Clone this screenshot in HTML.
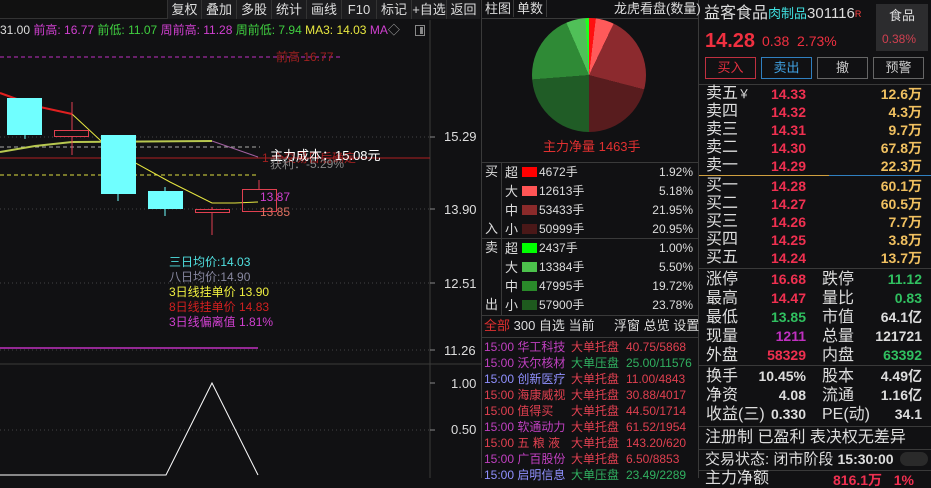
<!DOCTYPE html>
<html><head><meta charset="utf-8"><style>
*{margin:0;padding:0;box-sizing:border-box}
body{width:931px;height:478px;background:#111113;overflow:hidden;position:relative;font-family:"Liberation Sans","Noto Sans CJK SC",sans-serif;color:#ddd}
.t{position:absolute;white-space:nowrap;line-height:16px}
.r{text-align:right}
.hl{position:absolute;height:1px;background:#3a3a3a}
.vl{position:absolute;width:1px;background:#3a3a3a}
.btn{position:absolute;top:0;height:19px;background:#1c1c1e;border-left:1px solid #333;font-size:13px;line-height:19px;text-align:center;color:#ddd}
.s12{font-size:12px}.s13{font-size:13px}.s14{font-size:14px}
.rw div{height:19px;line-height:19px}
.r18 div{height:18px;line-height:18px}
.r19 div{height:19px;line-height:19px}
.lab{font-size:16px}
.num{font-size:14px;font-weight:bold}
</style></head><body>
<div style="position:absolute;left:0;top:0;width:480px;height:19px;background:#111;border-bottom:1px solid #333"></div>
<div class="btn" style="left:167px;width:34px">复权</div>
<div class="btn" style="left:201px;width:35px">叠加</div>
<div class="btn" style="left:236px;width:35px">多股</div>
<div class="btn" style="left:271px;width:35px">统计</div>
<div class="btn" style="left:306px;width:35px">画线</div>
<div class="btn" style="left:341px;width:35px">F10</div>
<div class="btn" style="left:376px;width:35px">标记</div>
<div class="btn" style="left:411px;width:35px">+自选</div>
<div class="btn" style="left:446px;width:34px">返回</div>
<div class="t s12" style="left:0;top:22px">31.00 <span style="color:#d040d0">前高: 16.77</span> <span style="color:#40d040">前低: 11.07</span> <span style="color:#d040d0">周前高: 11.28</span> <span style="color:#40d040">周前低: 7.94</span> <span style="color:#e8e840">MA3: 14.03</span> <span style="color:#d040d0">MA</span><span style="color:#aaa">◇</span></div>
<div style="position:absolute;left:415px;top:25px;width:10px;height:11px;border:1px solid #888"><div style="position:absolute;right:1px;top:1px;width:3px;height:7px;background:#888"></div></div>
<svg style="position:absolute;left:0;top:0" width="481" height="478">
<line x1="430" y1="20" x2="430" y2="478" stroke="#3a3a3a"/>
<line x1="0" y1="364" x2="481" y2="364" stroke="#3a3a3a"/>
<g stroke="#444" stroke-dasharray="1,3"><line x1="0" y1="137" x2="430" y2="137"/><line x1="0" y1="209" x2="430" y2="209"/><line x1="0" y1="283" x2="430" y2="283"/><line x1="0" y1="350" x2="430" y2="350"/><line x1="0" y1="430" x2="430" y2="430"/></g>
<g stroke="#888"><line x1="430" y1="137" x2="435" y2="137"/><line x1="430" y1="209" x2="435" y2="209"/><line x1="430" y1="283" x2="435" y2="283"/><line x1="430" y1="350" x2="435" y2="350"/><line x1="430" y1="383" x2="435" y2="383"/><line x1="430" y1="430" x2="435" y2="430"/></g>
<line x1="0" y1="57" x2="340" y2="57" stroke="#c030c0" stroke-dasharray="4,3"/>
<text x="276" y="61" fill="#a02020" font-size="12">前高 16.77</text>
<line x1="0" y1="147" x2="260" y2="147" stroke="#aaa" stroke-dasharray="4,3"/>
<line x1="0" y1="175" x2="258" y2="175" stroke="#e0e040" stroke-dasharray="4,3"/>
<line x1="0" y1="158" x2="430" y2="158" stroke="#b02020"/>
<polyline points="0,93 25,102 40,107 72,114" fill="none" stroke="#e02020" stroke-width="2"/>
<polyline points="72,114 100,140 130,160 170,182 212,203 235,203 258,202" fill="none" stroke="#e8e840"/>
<polyline points="0,152 35,146 72,142 212,141" fill="none" stroke="#b8c850" stroke-width="2"/>
<polyline points="212,141 258,157" fill="none" stroke="#a060a0"/>
<line x1="25" y1="135" x2="25" y2="139" stroke="#70ffff"/>
<rect x="7" y="98" width="35" height="37" fill="#70ffff"/>
<line x1="72" y1="102" x2="72" y2="155" stroke="#e04050"/>
<rect x="54.5" y="130.5" width="34" height="6" fill="#111" stroke="#e04050"/>
<line x1="118" y1="194" x2="118" y2="201" stroke="#70ffff"/>
<rect x="101" y="135" width="35" height="59" fill="#70ffff"/>
<line x1="165" y1="187" x2="165" y2="216" stroke="#70ffff"/>
<rect x="148" y="191" width="35" height="18" fill="#70ffff"/>
<line x1="212" y1="207" x2="212" y2="235" stroke="#e04050"/>
<rect x="195.5" y="209.5" width="34" height="3" fill="#111" stroke="#e04050"/>
<line x1="259" y1="180" x2="259" y2="189" stroke="#e04050"/>
<rect x="242.5" y="189.5" width="34" height="22" fill="none" stroke="#e04050"/>
<text x="262" y="162" fill="#a02020" font-size="12">1 个交易日后确定</text>
<text x="270" y="160" fill="#fff" font-size="13">主力成本：15.08元</text>
<text x="270" y="168" fill="#888" font-size="12">获利：-5.29%</text>
<text x="260" y="201" fill="#d040d0" font-size="12">13.87</text>
<text x="260" y="216" fill="#e07060" font-size="12">13.85</text>
<line x1="0" y1="348" x2="258" y2="348" stroke="#c030c0" stroke-width="1.5"/>
<polyline points="0,475 166,475 212,383 258,475" fill="none" stroke="#fff"/>
<g fill="#ddd" font-size="13"><text x="444" y="141">15.29</text><text x="444" y="214">13.90</text><text x="444" y="288">12.51</text><text x="444" y="355">11.26</text><text x="451" y="388">1.00</text><text x="451" y="434">0.50</text></g>
</svg>
<div class="t s12" style="left:169px;top:255px;line-height:15px">
<div style="color:#50e0e0">三日均价:14.03</div>
<div style="color:#8888a0">八日均价:14.90</div>
<div style="color:#f0f040">3日线挂单价 13.90</div>
<div style="color:#d02020">8日线挂单价 14.83</div>
<div style="color:#d040d0">3日线偏离值 1.81%</div>
</div>
<div class="vl" style="left:481px;top:0;height:478px"></div>
<div class="vl" style="left:698px;top:0;height:478px"></div>
<div class="t s13" style="left:485px;top:1px">柱图</div>
<div class="vl" style="left:513px;top:0;height:17px"></div>
<div class="t s13" style="left:517px;top:1px">单数</div>
<div class="vl" style="left:546px;top:0;height:17px"></div>
<div class="t s13" style="left:614px;top:1px">龙虎看盘(数量)</div>
<div class="hl" style="left:481px;top:18px;width:217px"></div>
<div style="position:absolute;left:532px;top:18px;width:114px;height:114px;border-radius:50%;background:conic-gradient(#ff1010 0 1.92%,#ff5a5a 1.92% 7.1%,#8c2a2e 7.1% 29.05%,#581c1e 29.05% 50%,#205c26 50% 73.78%,#2f8a36 73.78% 93.5%,#50c058 93.5% 99%,#20ff20 99% 100%)"></div>
<div class="t s13" style="left:543px;top:139px;color:#e03030">主力净量 1463手</div>
<div class="hl" style="left:481px;top:162px;width:217px"></div>
<div class="hl" style="left:481px;top:238px;width:217px"></div>
<div class="hl" style="left:481px;top:315px;width:217px"></div>
<div class="vl" style="left:501px;top:162px;height:153px"></div>
<div class="t s13" style="left:485px;top:164px">买</div><div class="t s13" style="left:485px;top:221px">入</div>
<div class="t s13" style="left:485px;top:240px">卖</div><div class="t s13" style="left:485px;top:297px">出</div>
<div class="t s13 rw" style="left:505px;top:163px"><div>超</div><div>大</div><div>中</div><div>小</div></div>
<div class="t s13 rw" style="left:505px;top:239px"><div>超</div><div>大</div><div>中</div><div>小</div></div>
<div style="position:absolute;left:522px;top:167px;width:15px;height:10px;background:#ff0000"></div>
<div style="position:absolute;left:522px;top:186px;width:15px;height:10px;background:#ff5555"></div>
<div style="position:absolute;left:522px;top:205px;width:15px;height:10px;background:#8a2a2a"></div>
<div style="position:absolute;left:522px;top:224px;width:15px;height:10px;background:#4a1818"></div>
<div style="position:absolute;left:522px;top:243px;width:15px;height:10px;background:#00ff00"></div>
<div style="position:absolute;left:522px;top:262px;width:15px;height:10px;background:#4cc24c"></div>
<div style="position:absolute;left:522px;top:281px;width:15px;height:10px;background:#2a8a2a"></div>
<div style="position:absolute;left:522px;top:300px;width:15px;height:10px;background:#1e5a1e"></div>
<div class="t s12 rw" style="left:539px;top:163px"><div>4672手</div><div>12613手</div><div>53433手</div><div>50999手</div></div>
<div class="t s12 rw" style="left:539px;top:239px"><div>2437手</div><div>13384手</div><div>47995手</div><div>57900手</div></div>
<div class="t s12 r rw" style="left:600px;width:93px;top:163px"><div>1.92%</div><div>5.18%</div><div>21.95%</div><div>20.95%</div></div>
<div class="t s12 r rw" style="left:600px;width:93px;top:239px"><div>1.00%</div><div>5.50%</div><div>19.72%</div><div>23.78%</div></div>
<div class="t s13" style="left:484px;top:318px"><span style="color:#e03030">全部</span> 300 自选 当前</div>
<div class="t s13" style="left:614px;top:318px">浮窗 总览 设置</div>
<div class="hl" style="left:481px;top:337px;width:217px"></div>
<div class="t s12" style="left:484px;top:339px;line-height:16px;color:#c040c0">
<div>15:00 华工科技</div><div>15:00 沃尔核材</div><div style="color:#9090ff">15:00 创新医疗</div><div style="color:#e04050">15:00 海康威视</div><div style="color:#e04050">15:00 值得买</div><div>15:00 软通动力</div><div style="color:#e04050">15:00 五 粮 液</div><div>15:00 广百股份</div><div style="color:#9090ff">15:00 启明信息</div></div>
<div class="t s12" style="left:571px;top:339px;line-height:16px;color:#e04050">
<div>大单托盘</div><div style="color:#30b060">大单压盘</div><div>大单托盘</div><div>大单托盘</div><div>大单托盘</div><div>大单托盘</div><div>大单托盘</div><div>大单托盘</div><div style="color:#30b060">大单压盘</div></div>
<div class="t s12" style="left:626px;top:339px;line-height:16px;color:#e04050">
<div>40.75/5868</div><div style="color:#30b060">25.00/11576</div><div>11.00/4843</div><div>30.88/4017</div><div>44.50/1714</div><div>61.52/1954</div><div>143.20/620</div><div>6.50/8853</div><div style="color:#30b060">23.49/2289</div></div>
<div class="t" style="left:704px;top:5px;font-size:16px;line-height:18px">益客食品<span style="color:#40e0e0;font-size:13px;vertical-align:top">肉制品</span><span style="font-size:15px">301116</span><span style="color:#ff4040;font-size:9px;vertical-align:top">R</span></div>
<div style="position:absolute;left:876px;top:4px;width:52px;height:47px;background:#2c2c2e"></div>
<div class="t s13" style="left:889px;top:8px">食品</div>
<div class="t s12" style="left:882px;top:31px;color:#d04050">0.38%</div>
<div class="t" style="left:705px;top:30px;font-size:20px;line-height:22px;font-weight:bold;color:#f03040">14.28</div>
<div class="t s14" style="left:762px;top:33px;color:#f03040">0.38 &nbsp;2.73%</div>
<div style="position:absolute;left:705px;top:57px;width:51px;height:22px;border:1px solid #c03040;color:#e03040;font-size:13px;text-align:center;line-height:20px">买入</div>
<div style="position:absolute;left:761px;top:57px;width:51px;height:22px;border:1px solid #3080c0;color:#40a0e0;font-size:13px;text-align:center;line-height:20px">卖出</div>
<div style="position:absolute;left:817px;top:57px;width:51px;height:22px;border:1px solid #666;color:#ccc;font-size:13px;text-align:center;line-height:20px">撤</div>
<div style="position:absolute;left:873px;top:57px;width:51px;height:22px;border:1px solid #666;color:#ccc;font-size:13px;text-align:center;line-height:20px">预警</div>
<div class="hl" style="left:699px;top:84px;width:232px"></div>
<div class="t lab r18" style="left:706px;top:85px"><div>卖五<span style="font-size:12px">￥</span></div><div>卖四</div><div>卖三</div><div>卖二</div><div>卖一</div></div>
<div class="t num r r18" style="left:730px;width:76px;top:85px;color:#f03050"><div>14.33</div><div>14.32</div><div>14.31</div><div>14.30</div><div>14.29</div></div>
<div class="t num r r18" style="left:830px;width:92px;top:85px;color:#f0c060"><div>12.6万</div><div>4.3万</div><div>9.7万</div><div>67.8万</div><div>22.3万</div></div>
<div style="position:absolute;left:699px;top:175px;width:130px;height:1px;background:#d0a040"></div>
<div style="position:absolute;left:829px;top:175px;width:102px;height:1px;background:#3080c0"></div>
<div class="t lab r18" style="left:706px;top:177px"><div>买一</div><div>买二</div><div>买三</div><div>买四</div><div>买五</div></div>
<div class="t num r r18" style="left:730px;width:76px;top:177px;color:#f03050"><div>14.28</div><div>14.27</div><div>14.26</div><div>14.25</div><div>14.24</div></div>
<div class="t num r r18" style="left:830px;width:92px;top:177px;color:#f0c060"><div>60.1万</div><div>60.5万</div><div>7.7万</div><div>3.8万</div><div>13.7万</div></div>
<div class="hl" style="left:699px;top:268px;width:232px"></div>
<div class="t lab r19" style="left:706px;top:270px"><div>涨停</div><div>最高</div><div>最低</div><div>现量</div><div>外盘</div></div>
<div class="t num r r19" style="left:730px;width:76px;top:270px"><div style="color:#f03050">16.68</div><div style="color:#f03050">14.47</div><div style="color:#30c060">13.85</div><div style="color:#c030c0">1211</div><div style="color:#f03050">58329</div></div>
<div class="t lab r19" style="left:822px;top:270px"><div>跌停</div><div>量比</div><div>市值</div><div>总量</div><div>内盘</div></div>
<div class="t num r r19" style="left:850px;width:72px;top:270px"><div style="color:#30c060">11.12</div><div style="color:#30c060">0.83</div><div>64.1亿</div><div>121721</div><div style="color:#30c060">63392</div></div>
<div class="hl" style="left:699px;top:365px;width:232px"></div>
<div class="t lab r19" style="left:706px;top:367px"><div>换手</div><div>净资</div><div>收益(三)</div></div>
<div class="t num r r19" style="left:730px;width:76px;top:367px"><div>10.45%</div><div>4.08</div><div>0.330</div></div>
<div class="t lab r19" style="left:822px;top:367px"><div>股本</div><div>流通</div><div>PE(动)</div></div>
<div class="t num r r19" style="left:850px;width:72px;top:367px"><div>4.49亿</div><div>1.16亿</div><div>34.1</div></div>
<div class="hl" style="left:699px;top:426px;width:232px"></div>
<div class="t lab" style="left:705px;top:430px">注册制 已盈利 表决权无差异</div>
<div class="hl" style="left:699px;top:449px;width:232px"></div>
<div class="t" style="left:705px;top:451px;font-size:15px">交易状态: 闭市阶段 <b style="font-size:14px">15:30:00</b></div>
<div style="position:absolute;left:900px;top:452px;width:28px;height:14px;border-radius:7px;background:#2a2a2a"></div>
<div class="hl" style="left:699px;top:470px;width:232px"></div>
<div class="t lab" style="left:705px;top:471px">主力净额</div>
<div class="t num" style="left:833px;top:472px;color:#f03050">816.1万 &nbsp; 1%</div>
</body></html>
